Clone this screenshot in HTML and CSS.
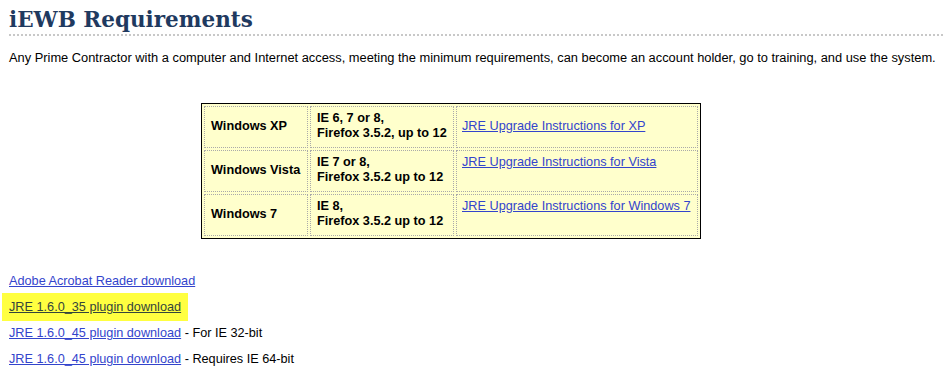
FILE: index.html
```html
<!DOCTYPE html>
<html lang="en">
<head>
    <meta charset="UTF-8">
    <title>iEWB Requirements</title>
    <link rel="stylesheet" href="styles.css">
</head>
<body>
    <div class="page">
        <h1>iEWB Requirements</h1>
        <p class="intro">Any Prime Contractor with a computer and Internet access, meeting the minimum requirements, can become an account holder, go to training, and use the system.</p>

        <table class="req-table">
            <tr>
                <td class="os">Windows XP</td>
                <td class="browser">IE 6, 7 or 8,<br>Firefox 3.5.2, up to 12</td>
                <td class="jre middle"><a href="#">JRE Upgrade Instructions for XP</a></td>
            </tr>
            <tr>
                <td class="os">Windows Vista</td>
                <td class="browser">IE 7 or 8,<br>Firefox 3.5.2 up to 12</td>
                <td class="jre"><a href="#">JRE Upgrade Instructions for Vista</a></td>
            </tr>
            <tr>
                <td class="os">Windows 7</td>
                <td class="browser">IE 8,<br>Firefox 3.5.2 up to 12</td>
                <td class="jre"><a href="#">JRE Upgrade Instructions for Windows 7</a></td>
            </tr>
        </table>

        <ul class="downloads">
            <li><a href="#">Adobe Acrobat Reader download</a></li>
            <li><span class="marked"><a href="#">JRE 1.6.0_35 plugin download</a></span></li>
            <li><a href="#">JRE 1.6.0_45 plugin download</a> - For IE 32-bit</li>
            <li><a href="#">JRE 1.6.0_45 plugin download</a> - Requires IE 64-bit</li>
        </ul>
    </div>
</body>
</html>
```

FILE: styles.css
```css
body {
    margin: 0;
    background-color: #fff;
    font-family: 'Liberation Sans', Arial, sans-serif;
    font-size: 12.7px;
    color: #000;
}

.page {
    padding: 6px 0 0 9px;
}

h1 {
    font-family: 'DejaVu Serif', Georgia, serif;
    font-size: 21.5px;
    font-weight: bold;
    color: #1f3a60;
    margin: 0;
    padding: 1px 0 2px 0;
    border-bottom: 2px dotted #c8c8c8;
    line-height: 25px;
}

.intro {
    margin: 14px 0 0 0;
    font-size: 12.85px;
    line-height: 16px;
    white-space: nowrap;
}

a {
    color: #3344cc;
}

.req-table {
    margin: 37px 0 0 192px;
    border: 1px solid #000;
    border-spacing: 2px;
    background-color: #ffffcc;
    font-size: 12.7px;
    table-layout: fixed;
}

.req-table td {
    border: 1px dotted #aaa;
    padding: 4px 6px 6px 6px;
    line-height: 15px;
    vertical-align: top;
    white-space: nowrap;
}

.req-table td.os {
    vertical-align: middle;
    font-weight: bold;
    width: 90px;
}

.req-table td.browser {
    font-weight: bold;
    width: 130px;
}

.req-table td.jre {
    width: 229px;
    padding-left: 5px;
}

.req-table td.middle {
    vertical-align: middle;
}

.downloads {
    list-style: none;
    margin: 34px 0 0 0;
    padding: 0;
}

.downloads li {
    line-height: 16px;
    margin-bottom: 10px;
}

.marked {
    display: inline-block;
    background-color: #ffff40;
    margin-left: -7px;
    padding: 6px 7px 6px 7px;
    margin-top: -6px;
    margin-bottom: -6px;
}

.marked a {
    color: #33443c;
}
```
